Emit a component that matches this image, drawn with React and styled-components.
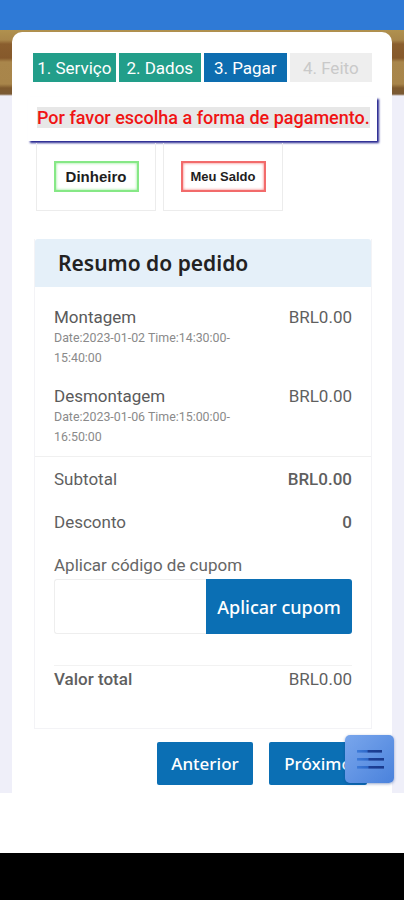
import React from "react";
import styled, { createGlobalStyle } from "styled-components";

const GlobalStyle = createGlobalStyle`
  body {
    margin: 0;
    background: #ffffff;
    font-family: Roboto, "Noto Sans", sans-serif;
  }
`;

const Page = styled.div`
  position: relative;
  width: 404px;
  height: 900px;
  overflow: hidden;
`;

const TopBar = styled.div`
  height: 30px;
  background: #2f7ad6;
`;

const Backdrop = styled.div`
  height: 763px;
  box-sizing: border-box;
  padding: 2px 12px 0;
  background: linear-gradient(
    to bottom,
    #b0914f 0px,
    #a8864a 10px,
    #8a5e2e 14px,
    #86592b 28px,
    #a9864b 32px,
    #a8854a 54px,
    #7f5a2e 58px,
    #7a5a34 64px,
    #efeff9 66px,
    #efeff9 100%
  );
`;

const Card = styled.div`
  height: 761px;
  box-sizing: border-box;
  background: #ffffff;
  border-radius: 10px 10px 0 0;
  padding: 21px 20px 0 21px;
  display: flex;
  flex-direction: column;
`;

const Steps = styled.div`
  display: flex;
  gap: 3px;
  height: 29px;
`;

const Step = styled.div`
  flex: 1;
  display: flex;
  align-items: center;
  justify-content: center;
  font-size: 17px;
  white-space: nowrap;
  color: ${(p) => (p.$state === "todo" ? "#c9c9c9" : "#ffffff")};
  background: ${(p) =>
    p.$state === "done" ? "#229e8a" : p.$state === "active" ? "#0d6db0" : "#eeeeee"};
`;

const Alert = styled.div`
  margin: 15px 0 0 -5px;
  width: 349px;
  height: 44px;
  box-sizing: border-box;
  padding: 10px 0 0 9px;
  box-shadow: 2px 2px 2px #24248f;
`;

const AlertText = styled.span`
  background: #e7e7e7;
  color: #f01414;
  font-size: 18px;
  font-weight: 500;
  line-height: 21px;
  white-space: nowrap;
`;

const Options = styled.div`
  display: flex;
  gap: 7px;
  margin: 2px 0 0 3px;
`;

const Option = styled.div`
  width: 120px;
  height: 68px;
  box-sizing: border-box;
  border: 1px solid #ececec;
  border-top: none;
  display: flex;
  align-items: center;
  justify-content: center;
`;

const OptionLabel = styled.div`
  width: 85px;
  height: 31px;
  box-sizing: border-box;
  display: flex;
  align-items: center;
  justify-content: center;
  font-family: "Liberation Sans", Arial, sans-serif;
  font-weight: bold;
  color: #1e1e1e;
  font-size: ${(p) => p.$size}px;
  border: 2px solid ${(p) => p.$color};
  box-shadow: inset 0 0 3px ${(p) => p.$color};
`;

const Summary = styled.div`
  margin: 28px 0 0 1px;
  width: 338px;
  height: 490px;
  box-sizing: border-box;
  border: 1px solid #f3f3f6;
  border-top: none;
  display: flex;
  flex-direction: column;
`;

const SummaryHeader = styled.div`
  height: 48px;
  background: #e5f0f9;
  border-radius: 3px 3px 0 0;
  display: flex;
  align-items: center;
  padding-left: 23px;
  font-family: "Noto Sans", sans-serif;
  font-weight: 600;
  font-size: 21px;
  color: #222222;
`;

const Items = styled.div`
  padding: 19px 19px 9px;
  display: flex;
  flex-direction: column;
  gap: 17px;
  border-bottom: 1px solid #f0f0f0;
`;

const Item = styled.div`
  display: flex;
  justify-content: space-between;
`;

const ItemTitle = styled.div`
  font-size: 17px;
  color: #5a5a5a;
  line-height: 22px;
`;

const ItemDate = styled.div`
  font-size: 12.4px;
  color: #8a8a8a;
  line-height: 20px;
  width: 190px;
`;

const Price = styled.div`
  font-size: 17px;
  color: #5f5f5f;
  line-height: 22px;
  font-weight: ${(p) => (p.$bold ? 500 : 400)};
`;

const Totals = styled.div`
  padding: 11px 19px 0;
  display: flex;
  flex-direction: column;
`;

const TotalRow = styled.div`
  display: flex;
  justify-content: space-between;
  align-items: center;
  height: 22px;
  margin-bottom: ${(p) => p.$mb || 0}px;
  font-size: 17px;
  color: #5f5f5f;
`;

const CouponLabel = styled.div`
  font-size: 17px;
  color: #666666;
  line-height: 22px;
`;

const CouponRow = styled.div`
  display: flex;
  height: 55px;
  margin-top: 3px;
`;

const CouponInput = styled.input`
  width: 152px;
  min-width: 0;
  flex: 0 0 152px;
  box-sizing: border-box;
  border: 1px solid #eeeeee;
  border-right: none;
  border-radius: 3px 0 0 3px;
  outline: none;
`;

const BlueButton = styled.button`
  border: none;
  background: #0b6fb4;
  color: #ffffff;
  font-family: "Noto Sans", sans-serif;
  font-weight: 500;
  font-size: ${(p) => p.$size || 17}px;
  white-space: nowrap;
  border-radius: 2px;
  padding: 0;
  cursor: pointer;
`;

const CouponButton = styled(BlueButton)`
  flex: 1;
  min-width: 0;
  border-radius: 0 3px 3px 0;
`;

const FinalRow = styled(TotalRow)`
  margin-top: 31px;
  padding-top: 2px;
  border-top: 1px solid #f2f2f2;
  font-weight: 500;
`;

const Nav = styled.div`
  display: flex;
  justify-content: flex-end;
  gap: 16px;
  margin: 13px 5px 0 0;
`;

const NavButton = styled(BlueButton)`
  width: ${(p) => p.$w}px;
  height: 43px;
`;

const WhiteGap = styled.div`
  height: 60px;
  background: #ffffff;
`;

const SystemBar = styled.div`
  height: 47px;
  background: #000000;
`;

const Fab = styled.button`
  position: absolute;
  left: 345px;
  top: 735px;
  width: 49px;
  height: 48px;
  border: none;
  padding: 0;
  border-radius: 5px;
  background: linear-gradient(135deg, #79a6ec, #4a82dc);
  box-shadow: 0 1px 3px rgba(20, 60, 140, 0.45);
  display: flex;
  align-items: center;
  justify-content: center;
`;

const MenuIcon = () => (
  <svg width="28" height="22" viewBox="0 0 28 22">
    <defs>
      <linearGradient id="bar" x1="0" x2="1" y1="0" y2="0">
        <stop offset="0" stopColor="#3d7ad8" />
        <stop offset="0.4" stopColor="#2f69c9" />
        <stop offset="0.45" stopColor="#1c3f97" />
        <stop offset="1" stopColor="#1a3a8c" />
      </linearGradient>
    </defs>
    <rect x="1" y="2" width="25" height="2.6" fill="url(#bar)" />
    <rect x="1" y="10" width="27" height="2.6" fill="url(#bar)" />
    <rect x="1" y="18" width="27" height="2.6" fill="url(#bar)" />
  </svg>
);

const App = () => {
  return (
    <Page>
      <GlobalStyle />
      <TopBar />
      <Backdrop>
        <Card>
          <Steps>
            <Step $state="done">1. Serviço</Step>
            <Step $state="done">2. Dados</Step>
            <Step $state="active">3. Pagar</Step>
            <Step $state="todo">4. Feito</Step>
          </Steps>
          <Alert>
            <AlertText>Por favor escolha a forma de pagamento.</AlertText>
          </Alert>
          <Options>
            <Option>
              <OptionLabel $color="#86e886" $size={15}>
                Dinheiro
              </OptionLabel>
            </Option>
            <Option>
              <OptionLabel $color="#f26b6b" $size={13}>
                Meu Saldo
              </OptionLabel>
            </Option>
          </Options>
          <Summary>
            <SummaryHeader>Resumo do pedido</SummaryHeader>
            <Items>
              <Item>
                <div>
                  <ItemTitle>Montagem</ItemTitle>
                  <ItemDate>Date:2023-01-02 Time:14:30:00-15:40:00</ItemDate>
                </div>
                <Price>BRL0.00</Price>
              </Item>
              <Item>
                <div>
                  <ItemTitle>Desmontagem</ItemTitle>
                  <ItemDate>Date:2023-01-06 Time:15:00:00-16:50:00</ItemDate>
                </div>
                <Price>BRL0.00</Price>
              </Item>
            </Items>
            <Totals>
              <TotalRow $mb={21}>
                <span>Subtotal</span>
                <Price $bold>BRL0.00</Price>
              </TotalRow>
              <TotalRow $mb={21}>
                <span>Desconto</span>
                <Price $bold>0</Price>
              </TotalRow>
              <CouponLabel>Aplicar código de cupom</CouponLabel>
              <CouponRow>
                <CouponInput />
                <CouponButton $size={18}>Aplicar cupom</CouponButton>
              </CouponRow>
              <FinalRow>
                <span>Valor total</span>
                <Price>BRL0.00</Price>
              </FinalRow>
            </Totals>
          </Summary>
          <Nav>
            <NavButton $w={96}>Anterior</NavButton>
            <NavButton $w={98}>Próximo</NavButton>
          </Nav>
        </Card>
      </Backdrop>
      <WhiteGap />
      <SystemBar />
      <Fab aria-label="menu">
        <MenuIcon />
      </Fab>
    </Page>
  );
};

export default App;
